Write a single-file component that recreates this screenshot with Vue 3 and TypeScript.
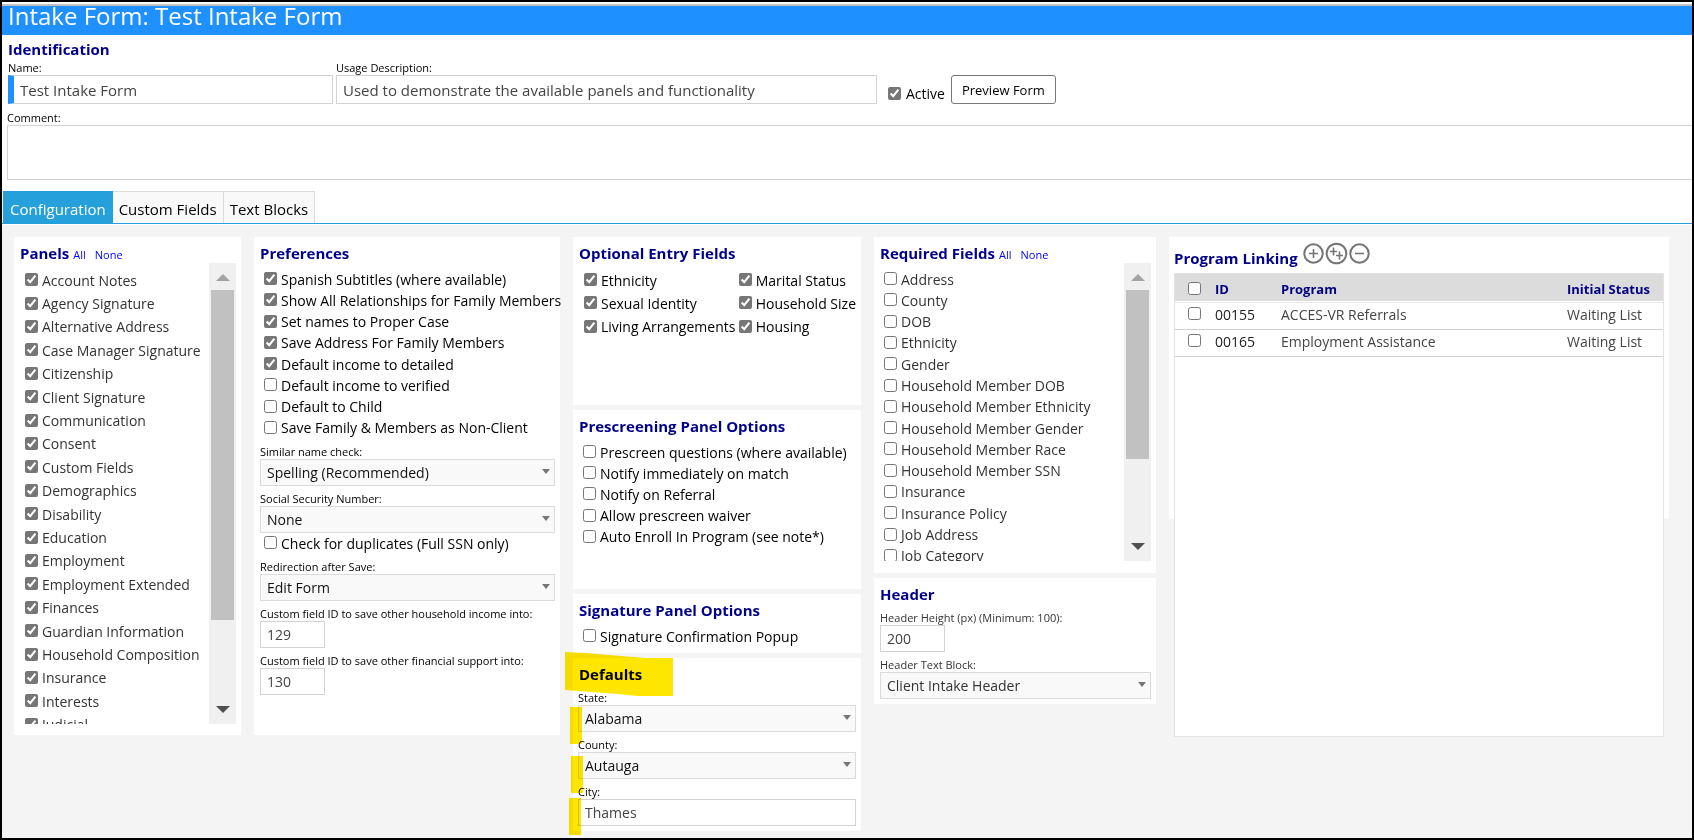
<script setup lang="ts">
import { reactive, ref } from 'vue'

interface Option {
  label: string
  checked: boolean
}

const on = (label: string): Option => ({ label, checked: true })
const off = (label: string): Option => ({ label, checked: false })

const name = ref('Test Intake Form')
const usage = ref('Used to demonstrate the available panels and functionality')
const comment = ref('')
const active = ref(true)

const tabs = ['Configuration', 'Custom Fields', 'Text Blocks']
const currentTab = ref('Configuration')

const panels = reactive<Option[]>(
  [
    'Account Notes', 'Agency Signature', 'Alternative Address', 'Case Manager Signature',
    'Citizenship', 'Client Signature', 'Communication', 'Consent', 'Custom Fields',
    'Demographics', 'Disability', 'Education', 'Employment', 'Employment Extended',
    'Finances', 'Guardian Information', 'Household Composition', 'Insurance', 'Interests',
    'Judicial',
  ].map(on),
)

const preferences = reactive<Option[]>([
  on('Spanish Subtitles (where available)'),
  on('Show All Relationships for Family Members'),
  on('Set names to Proper Case'),
  on('Save Address For Family Members'),
  on('Default income to detailed'),
  off('Default income to verified'),
  off('Default to Child'),
  off('Save Family & Members as Non-Client'),
])

const optionalFields = reactive<Option[]>(
  ['Ethnicity', 'Marital Status', 'Sexual Identity', 'Household Size', 'Living Arrangements', 'Housing'].map(on),
)

const prescreening = reactive<Option[]>(
  [
    'Prescreen questions (where available)', 'Notify immediately on match',
    'Notify on Referral', 'Allow prescreen waiver', 'Auto Enroll In Program (see note*)',
  ].map(off),
)

const requiredFields = reactive<Option[]>(
  [
    'Address', 'County', 'DOB', 'Ethnicity', 'Gender', 'Household Member DOB',
    'Household Member Ethnicity', 'Household Member Gender', 'Household Member Race',
    'Household Member SSN', 'Insurance', 'Insurance Policy', 'Job Address', 'Job Category',
  ].map(off),
)

const programs = reactive([
  { id: '00155', program: 'ACCES-VR Referrals', status: 'Waiting List', selected: false },
  { id: '00165', program: 'Employment Assistance', status: 'Waiting List', selected: false },
])

const incomeField = ref('129')
const supportField = ref('130')
const headerHeight = ref('200')
const city = ref('Thames')
const checkDuplicates = ref(false)
const signaturePopup = ref(false)
const allPrograms = ref(false)

function setAll(list: Option[], value: boolean) {
  list.forEach((o) => (o.checked = value))
}
</script>

<template>
  <div class="page">
    <header class="banner"><h1>Intake Form: Test Intake Form</h1></header>

    <section class="identification">
      <h2>Identification</h2>
      <div class="id-row">
        <div class="field name">
          <label for="name">Name:</label>
          <input id="name" v-model="name" type="text" />
        </div>
        <div class="field usage">
          <label for="usage">Usage Description:</label>
          <input id="usage" v-model="usage" type="text" />
        </div>
        <label class="active"><input v-model="active" type="checkbox" />Active</label>
        <button class="preview" type="button">Preview Form</button>
      </div>
      <div class="field comment">
        <label for="comment">Comment:</label>
        <textarea id="comment" v-model="comment"></textarea>
      </div>
    </section>

    <nav class="tabs" role="tablist">
      <button
        v-for="t in tabs"
        :key="t"
        type="button"
        role="tab"
        :aria-selected="t === currentTab"
        :class="{ current: t === currentTab }"
        @click="currentTab = t"
      >{{ t }}</button>
    </nav>

    <main class="content">
      <section class="card tall">
        <div class="title">
          <h2>Panels</h2>
          <a href="#" @click.prevent="setAll(panels, true)">All</a>
          <a href="#" @click.prevent="setAll(panels, false)">None</a>
        </div>
        <div class="scroller panels-scroller">
          <div class="viewport">
            <div class="options panel-options">
              <label v-for="o in panels" :key="o.label"><input v-model="o.checked" type="checkbox" />{{ o.label }}</label>
            </div>
          </div>
          <div class="scrollbar" aria-hidden="true">
            <span class="arrow up"></span><span class="thumb"></span><span class="arrow down"></span>
          </div>
        </div>
      </section>

      <section class="card tall">
        <div class="title"><h2>Preferences</h2></div>
        <div class="options pref-options">
          <label v-for="o in preferences" :key="o.label"><input v-model="o.checked" type="checkbox" />{{ o.label }}</label>
        </div>
        <div class="field">
          <label for="similar">Similar name check:</label>
          <span class="select"><select id="similar"><option>Spelling (Recommended)</option></select></span>
        </div>
        <div class="field">
          <label for="ssn">Social Security Number:</label>
          <span class="select"><select id="ssn"><option>None</option></select></span>
        </div>
        <div class="options duplicate">
          <label><input v-model="checkDuplicates" type="checkbox" />Check for duplicates (Full SSN only)</label>
        </div>
        <div class="field">
          <label for="redirect">Redirection after Save:</label>
          <span class="select"><select id="redirect"><option>Edit Form</option></select></span>
        </div>
        <div class="field">
          <label for="income">Custom field ID to save other household income into:</label>
          <input id="income" v-model="incomeField" class="short" type="text" />
        </div>
        <div class="field">
          <label for="support">Custom field ID to save other financial support into:</label>
          <input id="support" v-model="supportField" class="short" type="text" />
        </div>
      </section>

      <div class="column">
        <section class="card optional">
          <div class="title"><h2>Optional Entry Fields</h2></div>
          <div class="options optional-options">
            <label v-for="o in optionalFields" :key="o.label"><input v-model="o.checked" type="checkbox" />{{ o.label }}</label>
          </div>
        </section>
        <section class="card prescreen">
          <div class="title"><h2>Prescreening Panel Options</h2></div>
          <div class="options prescreen-options">
            <label v-for="o in prescreening" :key="o.label"><input v-model="o.checked" type="checkbox" />{{ o.label }}</label>
          </div>
        </section>
        <section class="card signature">
          <div class="title"><h2>Signature Panel Options</h2></div>
          <div class="options">
            <label><input v-model="signaturePopup" type="checkbox" />Signature Confirmation Popup</label>
          </div>
        </section>
        <section class="card form-card defaults">
          <div class="title"><h2>Defaults</h2></div>
          <div class="field">
            <label for="state">State:</label>
            <span class="select"><select id="state"><option>Alabama</option></select></span>
          </div>
          <div class="field">
            <label for="county">County:</label>
            <span class="select"><select id="county"><option>Autauga</option></select></span>
          </div>
          <div class="field">
            <label for="city">City:</label>
            <input id="city" v-model="city" type="text" />
          </div>
          <svg class="marker" width="112" height="188" viewBox="0 0 112 188" aria-hidden="true">
            <path d="M2 2 L22 3 L82 8 H110 V46 H75 L55 44 L2 40 Z" />
            <path d="M7 57 H19 V94 H7 Z M8 106 H20 V143 H8 Z M6 148 H18 V185 H6 Z" />
          </svg>
        </section>
      </div>

      <div class="column">
        <section class="card required">
          <div class="title">
            <h2>Required Fields</h2>
            <a href="#" @click.prevent="setAll(requiredFields, true)">All</a>
            <a href="#" @click.prevent="setAll(requiredFields, false)">None</a>
          </div>
          <div class="scroller required-scroller">
            <div class="viewport">
              <div class="options required-options">
                <label v-for="o in requiredFields" :key="o.label"><input v-model="o.checked" type="checkbox" />{{ o.label }}</label>
              </div>
            </div>
            <div class="scrollbar" aria-hidden="true">
              <span class="arrow up"></span><span class="thumb"></span><span class="arrow down"></span>
            </div>
          </div>
        </section>
        <section class="card form-card header-card">
          <div class="title"><h2>Header</h2></div>
          <div class="field">
            <label for="height">Header Height (px) (Minimum: 100):</label>
            <input id="height" v-model="headerHeight" class="short" type="text" />
          </div>
          <div class="field">
            <label for="block">Header Text Block:</label>
            <span class="select"><select id="block"><option>Client Intake Header</option></select></span>
          </div>
        </section>
      </div>

      <section class="card linking">
        <div class="linking-head">
          <h2>Program Linking</h2>
          <div class="tools">
            <button type="button" aria-label="Add program">
              <svg width="23" height="23" viewBox="0 0 23 23"><circle cx="11.5" cy="11.5" r="9.2" /><path d="M11.5 7v9M7 11.5h9" /></svg>
            </button>
            <button type="button" aria-label="Add several programs">
              <svg width="23" height="23" viewBox="0 0 23 23"><circle cx="11.5" cy="11.5" r="9.8" /><path d="M8.5 5.5v8M5 9.5h7M14.5 9.5v8M11 13.5h7" /></svg>
            </button>
            <button type="button" aria-label="Remove program">
              <svg width="23" height="23" viewBox="0 0 23 23"><circle cx="11.5" cy="11.5" r="9.2" /><path d="M7 11.5h9" /></svg>
            </button>
          </div>
        </div>
        <div class="grid-box">
          <table>
            <colgroup><col class="c-check" /><col class="c-id" /><col /><col class="c-status" /></colgroup>
            <thead>
              <tr>
                <th><input v-model="allPrograms" type="checkbox" aria-label="Select all programs" /></th>
                <th>ID</th>
                <th>Program</th>
                <th>Initial Status</th>
              </tr>
            </thead>
            <tbody>
              <tr v-for="p in programs" :key="p.id">
                <td><input v-model="p.selected" type="checkbox" :aria-label="'Select ' + p.program" /></td>
                <td class="id">{{ p.id }}</td>
                <td>{{ p.program }}</td>
                <td>{{ p.status }}</td>
              </tr>
            </tbody>
          </table>
        </div>
      </section>
    </main>
  </div>
</template>

<style>
body {
  margin: 0;
}
</style>

<style scoped>
.page,
.page * {
  box-sizing: border-box;
}
.page {
  display: flex;
  flex-direction: column;
  min-height: 100vh;
  padding-top: 2px;
  border: 2px solid #000;
  overflow: hidden;
  background: #fff;
  color: #000;
  font-family: "Open Sans", "Noto Sans", sans-serif;
  font-size: 14px;
  line-height: 20px;
}
h1,
h2 {
  margin: 0;
}
h2 {
  color: #00008b;
  font-size: 15px;
  line-height: 20px;
  font-weight: 700;
  white-space: nowrap;
}
input,
select,
textarea,
button {
  font-family: inherit;
  margin: 0;
}
input[type="checkbox"] {
  flex: none;
  width: 13px;
  height: 13px;
  accent-color: #767676;
}

.banner {
  height: 31px;
  padding-left: 6px;
  border-top: 2px solid #c0c0c0;
  background: #1e90ff;
}
.banner h1 {
  color: #fff;
  font-size: 24px;
  line-height: 20px;
  font-weight: 400;
}

.identification {
  padding: 1px 0 11px 5px;
}
.identification h2 {
  padding-left: 1px;
  line-height: 26px;
}
.id-row {
  display: flex;
  align-items: flex-end;
  gap: 3px;
  padding-left: 1px;
}
.field {
  display: flex;
  flex-direction: column;
  margin-top: 7px;
}
.field label {
  padding-bottom: 2px;
  font-size: 11px;
  line-height: 11px;
  white-space: nowrap;
}
.field input,
.field select,
.field textarea {
  width: 100%;
  height: 27px;
  padding: 0 6px;
  border: 1px solid #d3d3d3;
  border-radius: 0;
  background: #fff;
  color: #444;
  font-size: 14px;
}
.field .short {
  width: 65px;
}
.id-row .field {
  margin-top: 0;
}
.id-row .field input {
  height: 29px;
  padding: 1px 6px 0;
  font-size: 15px;
}
.id-row .name {
  flex: 0 1 325px;
}
.id-row .name input {
  border-left: 6px solid #1e90ff;
}
.id-row .usage {
  flex: 0 1 541px;
}
.active {
  display: flex;
  align-items: center;
  gap: 5px;
  padding: 0 3px 0 8px;
}
.active input {
  margin-bottom: 2px;
}
.preview {
  height: 29px;
  padding: 1px 10px 0;
  border: 1px solid #767676;
  border-radius: 3px;
  background: #fff;
  color: #000;
  font-size: 13px;
  white-space: nowrap;
}
.field.comment {
  margin-top: 8px;
}
.field textarea {
  display: block;
  height: 55px;
  border-right: 0;
  resize: none;
}

.tabs {
  display: flex;
  padding-left: 1px;
  border-bottom: 1px solid #25a0da;
}
.tabs button {
  height: 32px;
  padding: 3px 6px 0;
  border: 1px solid #dbdbdb;
  border-bottom: 0;
  border-left-width: 0;
  background: #f9f9f9;
  color: #000;
  font-size: 15px;
  white-space: nowrap;
}
.tabs .current {
  padding: 3px 6px 0 7px;
  border-color: #25a0da;
  background: #25a0da;
  color: #fff;
}

.content {
  flex: 1;
  display: grid;
  grid-template-columns: 227fr 306fr 288fr 282fr 500fr;
  gap: 13px;
  align-items: start;
  margin-top: 1px;
  padding: 12px 23px 6px 12px;
  background: #f4f4f4;
}
.column {
  display: flex;
  flex-direction: column;
  gap: 5px;
  min-width: 0;
}
.card {
  min-width: 0;
  padding: 6px 5px 6px 6px;
  background: #fff;
}
.tall {
  min-height: 498px;
}
.title {
  display: flex;
  align-items: baseline;
  height: 20px;
}
.title h2 {
  margin-right: 4px;
}
.title a {
  margin-right: 9px;
  color: #0000ff;
  font-size: 11px;
  text-decoration: none;
}

.options {
  display: grid;
  grid-auto-rows: 1fr;
  min-height: 21px;
  margin-top: 6px;
  padding-left: 4px;
}
.options label {
  display: flex;
  align-items: center;
  gap: 4px;
  white-space: nowrap;
}
.options input {
  margin-bottom: 2px;
}
.panel-options {
  height: 468px;
  padding-left: 5px;
}
.pref-options {
  height: 170px;
}
.duplicate {
  margin-top: 0;
}
.optional-options {
  grid-template-columns: 155fr 117fr;
  height: 70px;
  padding-left: 5px;
}
.prescreen-options {
  height: 106px;
}
.required-options {
  height: 298px;
}
.optional {
  min-height: 168px;
}
.prescreen {
  min-height: 179px;
}

.scroller {
  display: flex;
  color: #333;
}
.panels-scroller {
  height: 461px;
}
.required-scroller {
  height: 298px;
}
.required {
  min-height: 336px;
}
.viewport {
  flex: 1;
  min-width: 0;
  overflow: auto;
  scrollbar-width: none;
}
.scrollbar {
  flex: none;
  display: flex;
  flex-direction: column;
  align-items: center;
  width: 27px;
  background: #f0f0f0;
}
.thumb {
  width: 23px;
  background: #c1c1c1;
}
.panels-scroller .thumb {
  height: 330px;
}
.required-scroller .thumb {
  height: 169px;
}
.arrow {
  width: 0;
  height: 0;
  border: solid transparent;
}
.up {
  margin: 11px 0 9px;
  border-width: 0 7px 7px;
  border-bottom-color: #a3a3a3;
}
.down {
  margin: auto 0 11px;
  border-width: 7px 7px 0;
  border-top-color: #505050;
}

.select {
  position: relative;
  display: block;
}
.select::after {
  content: "";
  position: absolute;
  top: 10px;
  right: 5px;
  border: solid transparent;
  border-width: 5px 4px 0;
  border-top-color: #777;
  pointer-events: none;
}
.select select {
  display: block;
  appearance: none;
  background: #f9f9f9;
  border-color: #dbdbdb;
  color: #111;
}
.form-card {
  padding-bottom: 5px;
}
.form-card .title {
  height: 21px;
}
.defaults {
  position: relative;
  padding-left: 5px;
}
.defaults .title {
  padding-left: 1px;
}
.marker {
  position: absolute;
  left: -10px;
  top: -8px;
  fill: #ffe600;
  mix-blend-mode: multiply;
  pointer-events: none;
}
.header-card .field label,
.header-card select {
  color: #333;
}

.linking {
  height: 282px;
  padding: 0 5px;
}
.linking-head {
  display: flex;
  align-items: flex-end;
  gap: 4px;
  height: 36px;
  padding-bottom: 5px;
}
.tools {
  display: flex;
  padding-bottom: 3px;
}
.tools button {
  display: block;
  padding: 0;
  border: 0;
  background: none;
}
.tools svg {
  display: block;
  fill: none;
  stroke: #757575;
  stroke-width: 2;
}
.tools path {
  stroke-width: 1.6;
}
.grid-box {
  height: 464px;
  border: 1px solid #e3e3e3;
  background: #fff;
}
table {
  width: 100%;
  table-layout: fixed;
  border-collapse: separate;
  border-spacing: 0;
}
.c-check {
  width: 40px;
}
.c-id {
  width: 66px;
}
.c-status {
  width: 96px;
}
th,
td {
  text-align: left;
  vertical-align: middle;
  white-space: nowrap;
}
th {
  height: 28px;
  padding: 2px 0 0;
  border-bottom: 1px solid #fff;
  background: #dcdcdc;
  background-clip: padding-box;
  color: #000080;
  font-size: 13px;
  font-weight: 700;
}
td {
  height: 27px;
  padding: 0 0 2px;
  border-bottom: 1px solid #d0d0d0;
  color: #444;
}
tbody tr:first-child td {
  height: 28px;
  border-top: 1px solid #e8e8e8;
}
td.id {
  color: #222;
}
th input,
td input {
  display: block;
  margin-left: 13px;
}
td input {
  margin-bottom: 3px;
}
</style>
